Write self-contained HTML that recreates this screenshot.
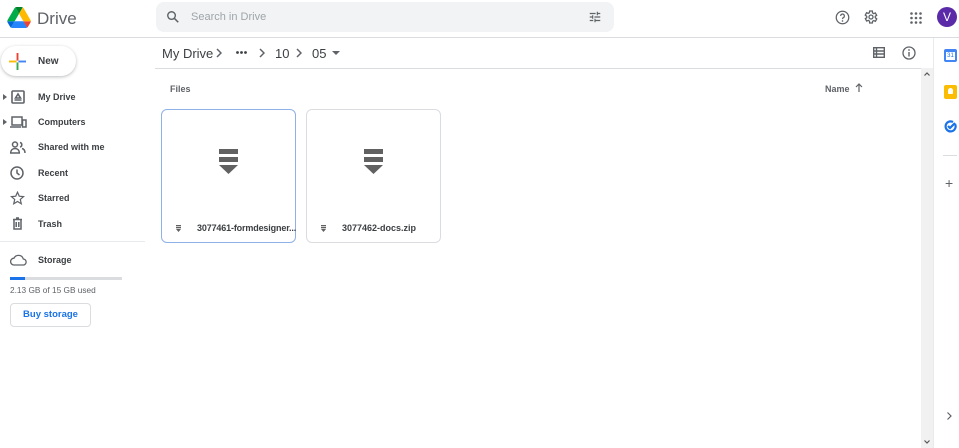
<!DOCTYPE html>
<html><head><style>
*{box-sizing:border-box;margin:0;padding:0}
body{width:959px;height:448px;overflow:hidden;background:#fff;font-family:"Liberation Sans",Arial,sans-serif;color:#3c4043;position:relative}
.a{position:absolute}
.nav{font-size:9px;font-weight:bold;color:#3c4043;position:absolute;left:38px}
.ic{position:absolute;left:10px}
</style></head><body>
<svg class="a" style="left:7px;top:7px" width="24" height="21" viewBox="0 0 87 78">
<path d="M6.6 66.85l3.85 6.65c.8 1.4 1.950 2.5 3.3 3.3L27.5 53H0c0 1.55.4 3.1 1.2 4.5z" fill="#0066da"/>
<path d="M43.65 25L29.9 1.2c-1.35.8-2.5 1.9-3.3 3.3L1.2 48.5A9 9 0 0 0 0 53h27.5z" fill="#00ac47"/>
<path d="M73.55 76.8c1.35-.8 2.5-1.9 3.3-3.3l1.6-2.75L86.1 57.5c.8-1.4 1.2-2.950 1.2-4.5H59.8l5.850 11.5z" fill="#ea4335"/>
<path d="M43.65 25L57.4 1.2C56.05.4 54.5 0 52.9 0H34.4c-1.6 0-3.15.45-4.5 1.2z" fill="#00832d"/>
<path d="M59.8 53H27.5L13.75 76.8c1.35.8 2.9 1.2 4.5 1.2h50.8c1.6 0 3.15-.45 4.5-1.2z" fill="#2684fc"/>
<path d="M73.4 26.5L60.7 4.5c-.8-1.4-1.950-2.5-3.3-3.3L43.65 25 59.8 53h27.45c0-1.55-.4-3.1-1.2-4.5z" fill="#ffba00"/>
</svg>
<div class="a" style="left:37px;top:9px;font-size:17px;color:#5f6368">Drive</div>
<div class="a" style="left:156px;top:2px;width:458px;height:30px;background:#f1f3f4;border-radius:8px"></div>
<svg class="a" style="left:166px;top:10px" width="14" height="14" viewBox="0 0 24 24"><circle cx="9.5" cy="9.5" r="6.5" fill="none" stroke="#5f6368" stroke-width="2.4"/><path d="M14.5 14.5L21 21" stroke="#5f6368" stroke-width="2.6"/></svg>
<div class="a" style="left:191px;top:11px;font-size:11px;color:#a0a4a8">Search in Drive</div>
<svg class="a" style="left:588px;top:10px" width="14" height="14" viewBox="0 0 24 24" fill="#5f6368"><path d="M3 17v2h6v-2H3zM3 5v2h10V5H3zm10 16v-2h8v-2h-8v-2h-2v6h2zM7 9v2H3v2h4v2h2V9H7zm14 4v-2H11v2h10zm-6-4h2V7h4V5h-4V3h-2v6z"/></svg>
<svg class="a" style="left:835px;top:10px" width="15" height="15" viewBox="0 0 24 24"><circle cx="12" cy="12" r="10" fill="none" stroke="#5f6368" stroke-width="2"/><path d="M9 9.5a3 3 0 1 1 4.5 2.600c-1 .6-1.5 1.2-1.5 2.4" fill="none" stroke="#5f6368" stroke-width="2"/><circle cx="12" cy="17.5" r="1.3" fill="#5f6368"/></svg>
<svg class="a" style="left:863px;top:9px" width="16" height="16" viewBox="0 0 24 24"><path d="M19.4 13a7.5 7.5 0 0 0 0-2l2.1-1.6-2-3.5-2.5 1a7 7 0 0 0-1.7-1L15 3h-4l-.4 2.600a7 7 0 0 0-1.7 1l-2.5-1-2 3.5L6.6 11a7.5 7.5 0 0 0 0 2l-2.1 1.600 2 3.5 2.5-1a7 7 0 0 0 1.7 1L11 21h4l.4-2.600a7 7 0 0 0 1.7-1l2.5 1 2-3.5z" transform="translate(-1 0)" fill="none" stroke="#5f6368" stroke-width="2"/><circle cx="12" cy="12" r="3" fill="none" stroke="#5f6368" stroke-width="2"/></svg>
<svg class="a" style="left:910px;top:12px" width="12" height="12" viewBox="0 0 12 12" fill="#5f6368"><circle cx="1.5" cy="1.5" r="1.3"/><circle cx="6" cy="1.5" r="1.3"/><circle cx="10.5" cy="1.5" r="1.3"/><circle cx="1.5" cy="6" r="1.3"/><circle cx="6" cy="6" r="1.3"/><circle cx="10.5" cy="6" r="1.3"/><circle cx="1.5" cy="10.5" r="1.3"/><circle cx="6" cy="10.5" r="1.3"/><circle cx="10.5" cy="10.5" r="1.3"/></svg>
<div class="a" style="left:937px;top:7px;width:20px;height:20px;border-radius:50%;background:#5b2aa8;color:#fff;font-size:12px;text-align:center;line-height:20px">V</div>
<div class="a" style="left:0;top:37px;width:959px;height:1px;background:#dadce0"></div>
<div class="a" style="left:1px;top:46px;width:75px;height:30px;border-radius:15px;box-shadow:0 1px 3px rgba(60,64,67,.35);background:#fff"></div>
<svg class="a" style="left:9px;top:53px" width="17" height="17" viewBox="0 0 18 18"><path d="M8 0h2v8H8z" fill="#ea4335"/><path d="M10 8h8v2h-8z" fill="#4285f4"/><path d="M8 10h2v8H8z" fill="#34a853"/><path d="M0 8h8v2H0z" fill="#fbbc04"/></svg>
<div class="a" style="left:38px;top:56px;font-size:10px;font-weight:bold;color:#3c4043">New</div>
<div class="a" style="left:3px;top:94px;width:0;height:0;border-left:4px solid #5f6368;border-top:3px solid transparent;border-bottom:3px solid transparent"></div>
<div class="a" style="left:3px;top:119px;width:0;height:0;border-left:4px solid #5f6368;border-top:3px solid transparent;border-bottom:3px solid transparent"></div>
<svg class="ic" style="top:90px;left:11px" width="14" height="14" viewBox="0 0 14 14" fill="none" stroke="#5f6368" stroke-width="1.6"><rect x="1" y="1" width="12" height="12" rx="1"/><path d="M3.5 10h7M4.5 8l2.5-4 2.5 4z"/></svg>
<svg class="ic" style="top:116px" width="17" height="12" viewBox="0 0 17 12" fill="none" stroke="#5f6368" stroke-width="1.5"><path d="M2 1h10v8H2zM0 11h11"/><rect x="12.5" y="4" width="3.5" height="7"/></svg>
<svg class="ic" style="top:141px" width="16" height="13" viewBox="0 0 16 13" fill="none" stroke="#5f6368" stroke-width="1.5"><circle cx="5" cy="3.5" r="2.5"/><path d="M0.7 12c0-3 2-4.5 4.3-4.5s4.3 1.5 4.3 4.5zM10 1.5a2.3 2.3 0 0 1 0 4.5M12 7.5c2 .5 3 2 3 4.5"/></svg>
<svg class="ic" style="top:166px" width="14" height="14" viewBox="0 0 14 14" fill="none" stroke="#5f6368" stroke-width="1.5"><circle cx="7" cy="7" r="6"/><path d="M7 3.5V7l2.5 2"/></svg>
<svg class="ic" style="top:191px" width="15" height="14" viewBox="0 0 24 23" fill="none" stroke="#5f6368" stroke-width="2"><path d="M12 2l2.9 6.5 7.1.7-5.4 4.7 1.6 7-6.2-3.7-6.2 3.7 1.6-7L2 9.2l7.1-.7z"/></svg>
<svg class="ic" style="top:217px;left:12px" width="11" height="13" viewBox="0 0 11 13" fill="none" stroke="#5f6368" stroke-width="1.5"><path d="M1 2.5h9M4 1h3M2 2.5v9.5h7V2.5M4.2 5v5M6.8 5v5"/></svg>
<div class="nav" style="top:92px">My Drive</div>
<div class="nav" style="top:117px">Computers</div>
<div class="nav" style="top:142px">Shared with me</div>
<div class="nav" style="top:168px">Recent</div>
<div class="nav" style="top:193px">Starred</div>
<div class="nav" style="top:219px">Trash</div>
<div class="a" style="left:0;top:241px;width:145px;height:1px;background:#e8eaed"></div>
<svg class="ic" style="top:254px" width="17" height="12" viewBox="0 0 17 12" fill="none" stroke="#5f6368" stroke-width="1.3"><path d="M4 11h9a3 3 0 0 0 .3-6A5 5 0 0 0 4 4.2 3.4 3.4 0 0 0 4 11z"/></svg>
<div class="nav" style="top:255px">Storage</div>
<div class="a" style="left:10px;top:277px;width:112px;height:3px;background:#dadce0"></div>
<div class="a" style="left:10px;top:277px;width:15px;height:3px;background:#1a73e8"></div>
<div class="a" style="left:10px;top:285px;font-size:8.3px;color:#5f6368">2.13 GB of 15 GB used</div>
<div class="a" style="left:10px;top:303px;width:81px;height:24px;border:1px solid #dadce0;border-radius:4px;color:#1a73e8;font-size:9.5px;font-weight:bold;text-align:center;line-height:22px">Buy storage</div>
<div class="a" style="left:162px;top:46px;font-size:13px;color:#3c4043;white-space:nowrap">My Drive</div>
<svg class="a" style="left:216px;top:48px" width="6" height="10" viewBox="0 0 6 10" fill="none" stroke="#5f6368" stroke-width="1.5"><path d="M1 1l4 4-4 4"/></svg>
<svg class="a" style="left:236px;top:51px" width="11" height="3" viewBox="0 0 11 3" fill="#3c4043"><circle cx="1.5" cy="1.5" r="1.4"/><circle cx="5.5" cy="1.5" r="1.4"/><circle cx="9.5" cy="1.5" r="1.4"/></svg>
<svg class="a" style="left:259px;top:48px" width="6" height="10" viewBox="0 0 6 10" fill="none" stroke="#5f6368" stroke-width="1.5"><path d="M1 1l4 4-4 4"/></svg>
<div class="a" style="left:275px;top:46px;font-size:13px">10</div>
<svg class="a" style="left:296px;top:48px" width="6" height="10" viewBox="0 0 6 10" fill="none" stroke="#5f6368" stroke-width="1.5"><path d="M1 1l4 4-4 4"/></svg>
<div class="a" style="left:312px;top:46px;font-size:13px">05</div>
<div class="a" style="left:332px;top:51px;border-top:4px solid #5f6368;border-left:4px solid transparent;border-right:4px solid transparent"></div>
<svg class="a" style="left:873px;top:47px" width="12" height="11" viewBox="0 0 12 11" fill="none" stroke="#5f6368" stroke-width="1.4"><rect x=".7" y=".7" width="10.6" height="9.6"/><path d="M.7 4h10.6M.7 7h10.6M3.5.7v9.6"/></svg>
<svg class="a" style="left:902px;top:46px" width="14" height="14" viewBox="0 0 14 14"><circle cx="7" cy="7" r="6" fill="none" stroke="#5f6368" stroke-width="1.3"/><path d="M7 6v4.5" stroke="#5f6368" stroke-width="1.4"/><circle cx="7" cy="4" r=".9" fill="#5f6368"/></svg>
<div class="a" style="left:155px;top:68px;width:766px;height:1px;background:#dadce0"></div>
<div class="a" style="left:170px;top:84px;font-size:9px;font-weight:bold;color:#5f6368">Files</div>
<div class="a" style="left:825px;top:84px;font-size:9px;font-weight:bold;color:#5f6368">Name</div>
<svg class="a" style="left:855px;top:83px" width="8" height="9" viewBox="0 0 8 9" fill="none" stroke="#5f6368" stroke-width="1.2"><path d="M4 9V1M1 4l3-3 3 3"/></svg>
<div class="a" style="left:161px;top:109px;width:135px;height:134px;border:1px solid #8fb1e6;border-radius:6px"></div>
<div class="a" style="left:306px;top:109px;width:135px;height:134px;border:1px solid #dadce0;border-radius:6px"></div>
<svg class="a" style="left:219px;top:149px" width="19" height="25" viewBox="0 0 19 25" fill="#616161"><rect width="19" height="5"/><rect y="8" width="19" height="5"/><path d="M0 16h19l-9.5 9z"/></svg>
<svg class="a" style="left:364px;top:149px" width="19" height="25" viewBox="0 0 19 25" fill="#616161"><rect width="19" height="5"/><rect y="8" width="19" height="5"/><path d="M0 16h19l-9.5 9z"/></svg>
<svg class="a" style="left:176px;top:225px" width="5" height="7" viewBox="0 0 5 7" fill="#616161"><rect width="5" height="1.3"/><rect y="2" width="5" height="1.3"/><path d="M0 4h5L2.5 7z"/></svg>
<svg class="a" style="left:321px;top:225px" width="5" height="7" viewBox="0 0 5 7" fill="#616161"><rect width="5" height="1.3"/><rect y="2" width="5" height="1.3"/><path d="M0 4h5L2.5 7z"/></svg>
<div class="a" style="left:197px;top:223px;font-size:9px;font-weight:bold;color:#3c4043;letter-spacing:-0.15px">3077461-formdesigner...</div>
<div class="a" style="left:342px;top:223px;font-size:9px;font-weight:bold;color:#3c4043">3077462-docs.zip</div>
<div class="a" style="left:921px;top:68px;width:12px;height:380px;background:#f1f1f1"></div>
<svg class="a" style="left:924px;top:72px" width="6" height="4" viewBox="0 0 6 4" fill="none" stroke="#555" stroke-width="1.2"><path d="M.5 3.5l2.5-2.5 2.5 2.5"/></svg>
<svg class="a" style="left:924px;top:440px" width="6" height="4" viewBox="0 0 6 4" fill="none" stroke="#555" stroke-width="1.2"><path d="M.5.5l2.5 2.5 2.5-2.5"/></svg>
<div class="a" style="left:933px;top:38px;width:1px;height:410px;background:#e8eaed"></div>
<div class="a" style="left:944px;top:49px;width:13px;height:13px;background:#4285f4;border-radius:2px"></div>
<div class="a" style="left:946px;top:52px;width:9px;height:8px;background:#fff;font-size:6px;color:#1a73e8;text-align:center;line-height:8px">31</div>
<div class="a" style="left:944px;top:85px;width:13px;height:14px;background:#fbbc04;border-radius:2px"></div>
<div class="a" style="left:948px;top:88px;width:5px;height:6px;background:#fff;border-radius:3px 3px 1px 1px"></div>
<svg class="a" style="left:944px;top:120px" width="13" height="13" viewBox="0 0 13 13" fill="none" stroke="#1a73e8" stroke-width="2.2"><path d="M11 4a5 5 0 1 1-2-2"/><path d="M4 6l2 2 5-5"/></svg>
<div class="a" style="left:943px;top:155px;width:14px;height:1px;background:#dadce0"></div>
<div class="a" style="left:945px;top:175px;font-size:14px;color:#5f6368">+</div>
<svg class="a" style="left:947px;top:412px" width="5" height="8" viewBox="0 0 5 8" fill="none" stroke="#5f6368" stroke-width="1.2"><path d="M.5.5l3.5 3.5-3.5 3.5"/></svg>
</body></html>
